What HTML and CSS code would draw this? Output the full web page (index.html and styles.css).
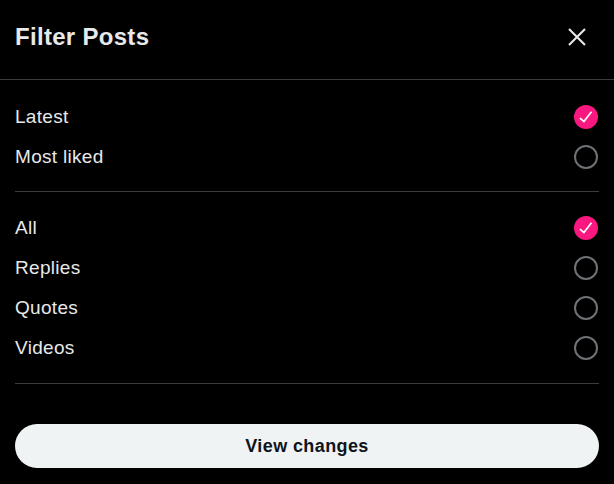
FILE: index.html
```html
<!DOCTYPE html>
<html>
<head>
<meta charset="utf-8">
<link rel="stylesheet" href="styles.css">
</head>
<body>
<div class="dialog">
  <header class="header">
    <h1 class="title">Filter Posts</h1>
    <button class="close" aria-label="Close">
      <svg viewBox="0 0 20 20" width="20" height="20"><path d="M2 2L18 18M18 2L2 18" stroke="#e7e9ea" stroke-width="2.1" fill="none"/></svg>
    </button>
  </header>
  <div class="body">
    <section class="group sort">
      <div class="row"><span>Latest</span><span class="radio on"><svg viewBox="0 0 24 24" width="20" height="20"><path d="M9.64 18.952l-5.55-4.861 1.317-1.504 3.951 3.459 8.459-10.948L19.4 6.32 9.64 18.952z" fill="#fff"/></svg></span></div>
      <div class="row"><span>Most liked</span><span class="radio"></span></div>
    </section>
    <section class="group kind">
      <div class="row"><span>All</span><span class="radio on"><svg viewBox="0 0 24 24" width="20" height="20"><path d="M9.64 18.952l-5.55-4.861 1.317-1.504 3.951 3.459 8.459-10.948L19.4 6.32 9.64 18.952z" fill="#fff"/></svg></span></div>
      <div class="row"><span>Replies</span><span class="radio"></span></div>
      <div class="row"><span>Quotes</span><span class="radio"></span></div>
      <div class="row"><span>Videos</span><span class="radio"></span></div>
    </section>
    <button class="primary">View changes</button>
  </div>
</div>
</body>
</html>
```

FILE: styles.css
```css
html, body {
  margin: 0;
  padding: 0;
  background: #000;
  height: 100%;
}
body {
  font-family: "Liberation Sans", Arial, sans-serif;
  color: #e7e9ea;
}
.dialog {
  width: 614px;
}
.header {
  border-bottom: 1px solid #3a3d40;
  display: flex;
  align-items: center;
  justify-content: space-between;
  padding: 0 27px 6px 15px;
  box-sizing: content-box;
  height: 73px;
}
.title {
  margin: 0;
  font-size: 24px;
  font-weight: bold;
  letter-spacing: 0.3px;
}
.close {
  background: none;
  border: 0;
  padding: 0;
  width: 20px;
  height: 20px;
  display: flex;
  cursor: pointer;
}
.body {
  padding: 0 15px;
}
.group {
  border-bottom: 1px solid #3a3d40;
}
.sort {
  padding: 17px 0 14px;
}
.kind {
  padding: 16px 0 15px;
}
.row {
  height: 40px;
  display: flex;
  align-items: center;
  justify-content: space-between;
  font-size: 19px;
  letter-spacing: 0.3px;
}
.radio {
  width: 24px;
  height: 24px;
  box-sizing: border-box;
  border: 2px solid #6e7175;
  border-radius: 50%;
  display: flex;
  align-items: center;
  justify-content: center;
  margin-right: 1px;
}
.radio.on {
  background: #f91880;
  border-color: #f91880;
}
.primary {
  display: block;
  width: 100%;
  height: 44px;
  margin-top: 40px;
  border: 0;
  border-radius: 22px;
  background: #eff3f4;
  color: #0f1419;
  font-family: "Liberation Sans", Arial, sans-serif;
  font-size: 18px;
  font-weight: bold;
  letter-spacing: 0.4px;
}
```
